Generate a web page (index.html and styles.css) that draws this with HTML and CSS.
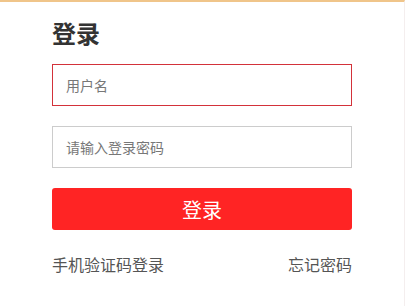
FILE: index.html
```html
<!DOCTYPE html>
<html lang="zh">
<head>
<meta charset="utf-8">
<link rel="stylesheet" href="styles.css">
</head>
<body>
<div class="panel">
  <div class="form">
    <h1 class="title">登录</h1>
    <div class="field field-active"><span class="placeholder">用户名</span></div>
    <div class="field"><span class="placeholder">请输入登录密码</span></div>
    <button class="submit">登录</button>
    <div class="links">
      <a class="link">手机验证码登录</a>
      <a class="link">忘记密码</a>
    </div>
  </div>
</div>
</body>
</html>
```

FILE: styles.css
```css
html, body {
  margin: 0;
  padding: 0;
  background: #fff;
}
body {
  font-family: "Noto Sans CJK SC", "Noto Sans", sans-serif;
  width: 407px;
  height: 306px;
  overflow: hidden;
}
.panel {
  width: 405px;
  height: 306px;
  border-right: 1px solid #f4eeee;
  box-sizing: border-box;
  border-top: 2px solid #f0c58a;
  background: #fff;
}
.form {
  width: 300px;
  padding-left: 52px;
  display: flex;
  flex-direction: column;
}
.title {
  margin: 15px 0 0 0;
  font-size: 24px;
  line-height: 32px;
  font-weight: bold;
  color: #333;
}
.field {
  margin-top: 15px;
  height: 42px;
  box-sizing: border-box;
  border: 1px solid #ccc;
  display: flex;
  align-items: center;
  padding-left: 13px;
}
.field + .field {
  margin-top: 20px;
}
.field-active {
  border-color: #d3323a;
}
.placeholder {
  font-size: 14px;
  color: #777;
}
.submit {
  margin-top: 20px;
  height: 42px;
  border: none;
  border-radius: 3px;
  background: #ff2424;
  color: #fff;
  font-family: inherit;
  font-size: 20px;
  padding: 0;
}
.links {
  margin-top: 23px;
  display: flex;
  justify-content: space-between;
}
.link {
  font-size: 16px;
  line-height: 22px;
  color: #555;
}
```
